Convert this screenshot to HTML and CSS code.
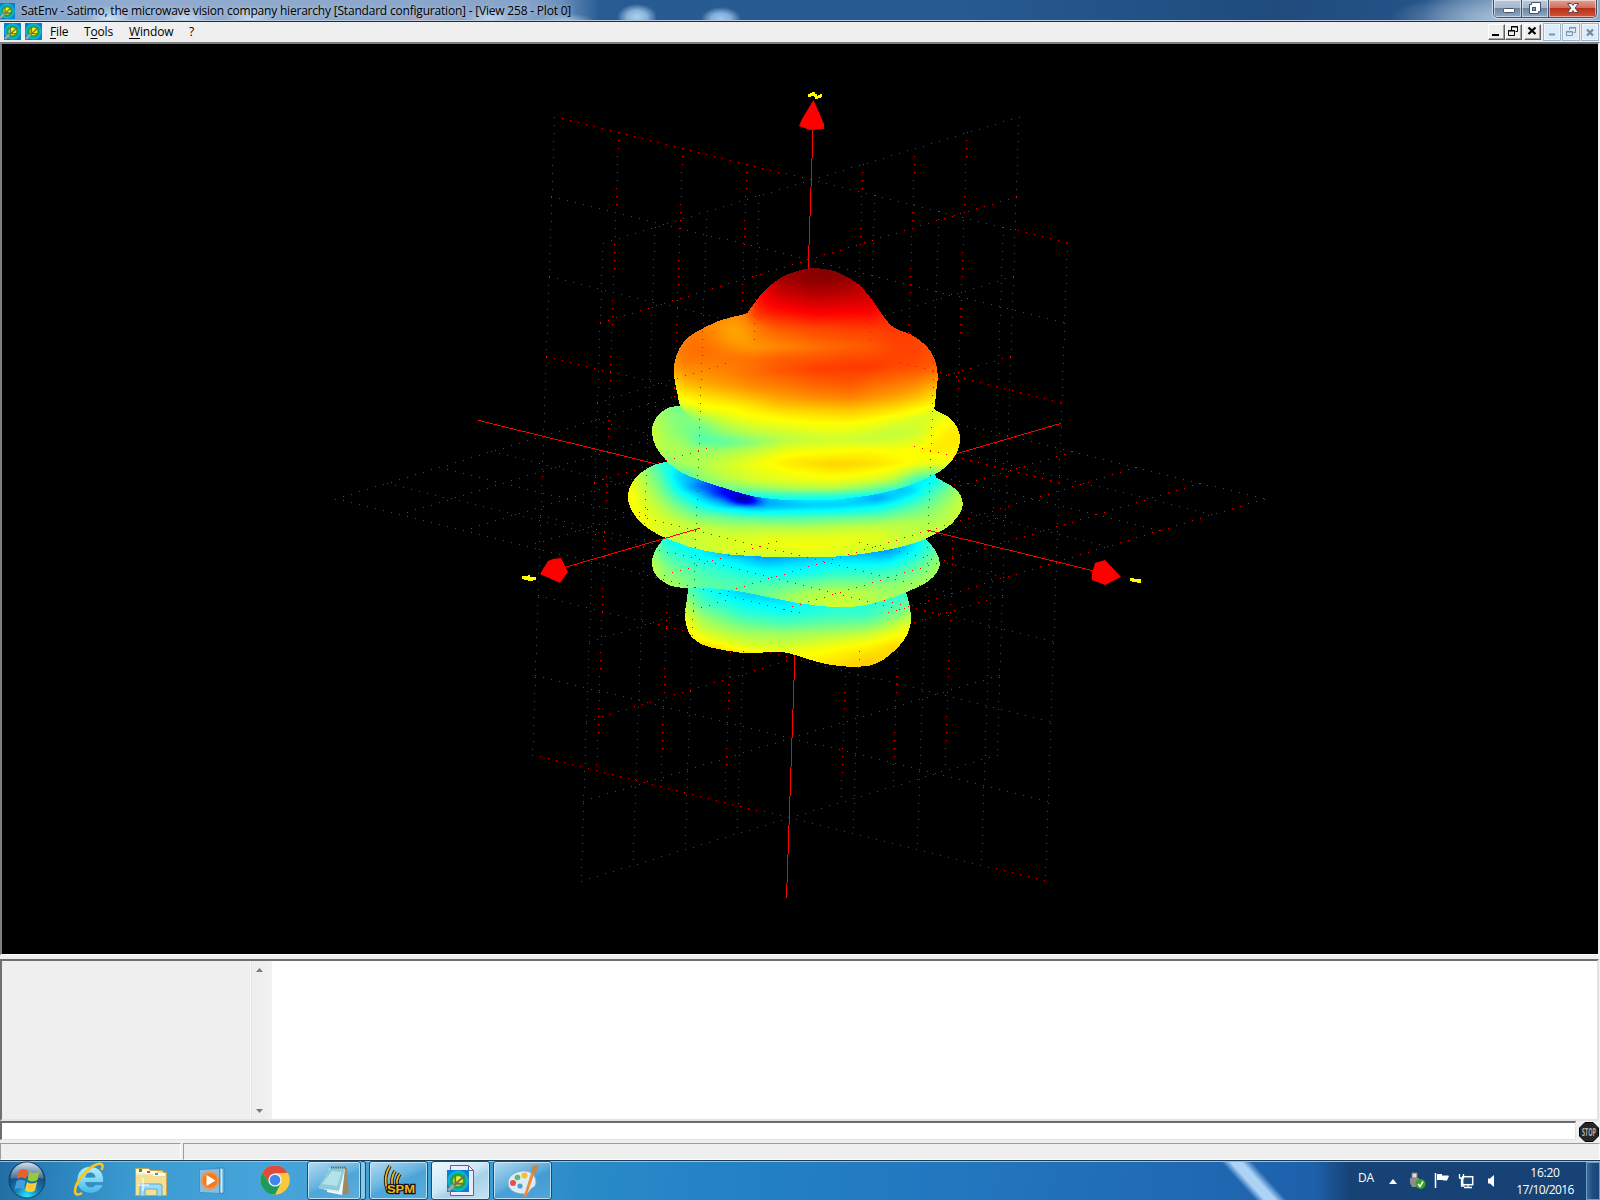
FILE: index.html
```html
<!DOCTYPE html>
<html lang="en">
<head>
<meta charset="utf-8">
<title>SatEnv</title>
<link rel="stylesheet" href="styles.css">
</head>
<body>
<svg class="defs" width="0" height="0">
  <defs>
    <radialGradient id="lobe"><stop offset="0" stop-color="#fff200"/><stop offset=".38" stop-color="#f4ee10"/><stop offset=".52" stop-color="#18a040"/><stop offset=".72" stop-color="#08b088"/><stop offset=".86" stop-color="#10b8e8"/><stop offset="1" stop-color="#0880d0"/></radialGradient>
    <radialGradient id="orb" cx=".5" cy=".95" r=".95"><stop offset="0" stop-color="#28e8ff"/><stop offset=".35" stop-color="#1280b8"/><stop offset=".7" stop-color="#164a78"/><stop offset="1" stop-color="#385f84"/></radialGradient>
    <linearGradient id="gloss" x2="0" y2="1"><stop offset="0" stop-color="#eef6fa" stop-opacity=".85"/><stop offset="1" stop-color="#c0d8e8" stop-opacity=".25"/></linearGradient>
    <linearGradient id="ieblue" x2="0" y2="1"><stop offset="0" stop-color="#b8ecfb"/><stop offset=".5" stop-color="#7fd8f6"/><stop offset="1" stop-color="#45b5e8"/></linearGradient>
    <linearGradient id="manila" x2="1" y2="1"><stop offset="0" stop-color="#fdf3bd"/><stop offset="1" stop-color="#e3c468"/></linearGradient>
    <symbol id="antenna" viewBox="0 0 16 16">
      <rect width="16" height="16" fill="url(#lobe)"/>
      <path d="M6 4v6h7M13 4 4 12" stroke="#6f7256" stroke-width="1.3" fill="none"/>
      <path d="M1 15l4-4" stroke="#a7a78e" stroke-width="2.4"/>
    </symbol>
  </defs>
</svg>

<div class="desktop">
  <header class="titlebar">
    <svg class="app-icon" width="16" height="16"><use href="#antenna"/></svg>
    <span class="title">SatEnv - Satimo, the microwave vision company hierarchy [Standard configuration] - [View 258 - Plot 0]</span>
    <div class="window-buttons">
      <div class="wb wb-min"><svg width="28" height="18"><rect x="9.500" y="8.500" width="11" height="4" rx="1" fill="#fff" stroke="#46536b"/></svg></div>
      <div class="wb wb-max"><svg width="27" height="18"><path d="M9.500 2.500h9v9h-2v2h-9v-9h2z" fill="#fff" stroke="#46536b"/><rect x="10.500" y="7.500" width="3" height="3" fill="#8fa3b8" stroke="#46536b"/></svg></div>
      <div class="wb wb-close"><svg width="47" height="18"><path d="M18.500 3.500h4l1.500 2 1.500-2h4L26 8l3.500 4.500h-4l-1.500-2-1.500 2h-4L22 8z" fill="#fff" stroke="#5a4550"/></svg></div>
    </div>
  </header>

  <nav class="menubar">
    <svg class="m-icon" width="17" height="17"><use href="#antenna"/></svg>
    <svg class="m-icon" width="17" height="17"><use href="#antenna"/></svg>
    <span class="m m-file"><u>F</u>ile</span>
    <span class="m m-tools">T<u>o</u>ols</span>
    <span class="m m-window"><u>W</u>indow</span>
    <span class="m">?</span>
    <div class="mdi">
      <div class="cb"><svg width="14" height="12"><path d="M3 10h7" stroke="#000" stroke-width="2"/></svg></div>
      <div class="cb cb-gap"><svg width="14" height="12"><path d="M5.500 5V1.500h6v5h-2M5 2h7M2.500 5.500h6v5h-6zM2 6h7" stroke="#000" fill="none"/></svg></div>
      <div class="cb"><svg width="14" height="12"><path d="M3.500 2.500l7 6.500M10.500 2.500l-7 6.500" stroke="#000" stroke-width="2.200"/></svg></div>
      <div class="gb"><svg width="14" height="14"><path d="M4 9.500h6" stroke="#7f95a8" stroke-width="2"/></svg></div>
      <div class="gb"><svg width="14" height="14"><path d="M5.500 5V2.500h6v5h-2M5 3h7M2.500 6.500h6v4h-6zM2 7h7" stroke="#7f95a8" fill="none"/></svg></div>
      <div class="gb"><svg width="14" height="14"><path d="M4 4.500l6 6M10 4.500l-6 6" stroke="#76899b" stroke-width="2.200"/></svg></div>
    </div>
  </nav>

  <main class="plot"><canvas id="plot" width="1596" height="910"></canvas></main>

  <section class="output">
    <div class="tree"></div>
    <div class="scroll">
      <svg width="7" height="4"><path d="M3.500 0 7 4H0z" fill="#7b7b7b"/></svg>
      <svg width="7" height="4"><path d="M3.500 4 7 0H0z" fill="#7b7b7b"/></svg>
    </div>
    <div class="log"></div>
  </section>
  <section class="command">
    <div class="input"></div>
    <svg width="20" height="20"><path d="M6 .5h8L19.500 6v8L14 19.500H6L.5 14V6z" fill="#262626" stroke="#000"/><text x="3" y="14" textLength="14" lengthAdjust="spacingAndGlyphs" class="stop">STOP</text></svg>
  </section>
  <footer class="status"><div class="cell-a"></div><div class="cell-b"></div></footer>

  <div class="taskbar">
    <svg class="orb" width="40" height="38" viewBox="7 0 40 38">
      <circle cx="27" cy="19" r="18" fill="url(#orb)" stroke="#173f63"/>
      <path d="M10.500 18a16.500 16.500 0 0 1 33 0q-16-5-33 0z" fill="url(#gloss)"/>
      <path d="M19 9.500q4-3 9 0l-2 8.500q-4-3-9 0z" fill="#e8602c"/>
      <path d="M29.500 10.500q4 3 10 0l-2 8.500q-5 3-10 0z" fill="#97c93d"/>
      <path d="M16.500 20q4-3 9 0l-2 8.500q-4-3-9 0z" fill="#3f9fe0"/>
      <path d="M27 21q4 3 10 0l-2 8.500q-5 3-10 0z" fill="#ffcb3a"/>
    </svg>
    <svg class="ie" width="32" height="36" viewBox="73 0 32 36">
      <path d="M90 5.500c8 0 13.500 5.500 13.500 13.500v2.500H85.500c.5 3 2.500 4.500 5.500 4.500 2.200 0 3.600-.8 4.400-2.200h7.600c-2 5.500-6.500 8.500-12.500 8.500-8 0-13.500-5.500-13.500-13.300C77 11.300 82.500 5.500 90 5.500zm-4.300 10.700h9.400c-.5-3-2-4.400-4.700-4.400-2.600 0-4.200 1.500-4.700 4.400z" fill="url(#ieblue)" stroke="#2a86bd" stroke-width=".6"/>
      <path d="M82 32c-4 2.500-7 2-7-2 0-8 12-24 23-27 5-1 5.500 2 3.500 6" fill="none" stroke="#f8c61c" stroke-width="2.600"/>
    </svg>
    <svg class="folder" width="34" height="32" viewBox="134 5 34 32">
      <path d="M135.500 7.500h13l2 2h12l1 2h3v23h-31z" fill="url(#manila)" stroke="#c7a650"/>
      <path d="M137 8h12v4h-12zM145 10h12v3h-12zM153 12h12v3h-12z" fill="#fffdf0"/>
      <path d="M139 8h3v3h-3z" fill="#12a54a"/><path d="M147 10h3v2h-3z" fill="#d8402c"/><path d="M155 12h3v2h-3z" fill="#3b8fe0"/>
      <path d="M136 14h12l2 2h16v18h-30z" fill="#f3e092"/>
      <path d="M140 35V25q0-2 2-2h18q2 0 2 2v10h-5v-7h-12v7z" fill="#9fdcf4" stroke="#5aa9cf"/>
      <path d="M143 17v13M138 24h11" stroke="#fff" stroke-width="1"/>
    </svg>
    <svg class="wmp" width="30" height="28" viewBox="198 6 30 28">
      <path d="M215 7h9v25h-9z" fill="#8cc3e2" stroke="#3784b5"/><path d="M221.500 8v24" stroke="#d7eef9"/>
      <path d="M199.500 8.500l20-1v25l-20-1z" fill="#86bedf" stroke="#4a90bd"/>
      <circle cx="210" cy="19.500" r="9" fill="#f47a20"/><circle cx="210" cy="19.500" r="8" fill="none" stroke="#fba35e"/>
      <path d="M206.500 14v11l9-5.500z" fill="#fff"/>
    </svg>
    <svg class="chrome" width="30" height="30" viewBox="-15 -15 30 30">
      <circle r="14.500" fill="#fbc93d"/>
      <path d="M-12.600-7.200A14.500 14.500 0 0 1 12.600-7.200L0-6.500-5.600 3.200z" fill="#dd4b3e"/>
      <path d="M-12.600-7.200A14.500 14.500 0 0 0 .3 14.500L6 3.200-5.600 3.200z" fill="#1c9c5a"/>
      <path d="M0-6.600h13.100A14.500 14.500 0 0 1 .3 14.500L6 3.200z" fill="#fbc93d"/>
      <circle r="6.600" fill="#f4f7f8"/><circle r="5.300" fill="#3f86ee"/>
    </svg>

    <div class="task task-stack">
      <svg width="34" height="32" viewBox="317 4 34 32">
        <path d="M330 7h17l2 25-5 2z" fill="#9b8a66"/><path d="M329 7h16l-3 27-15-3z" fill="#f5f9fa"/>
        <path d="M330 7h15l-6 23-21-3z" fill="#8ccbd9"/><path d="M332 10l10 1-5 14-15-2z" fill="#b4e2e9"/>
        <path d="M331 6.500h15" stroke="#51606a" stroke-width="2" stroke-dasharray="1.200 1"/>
        <path d="M318 27l21 3-1 2z" fill="#d9f0f2"/>
      </svg>
    </div>
    <div class="stack-edge"></div>
    <div class="task">
      <svg width="36" height="32" viewBox="381 4 36 32">
        <g fill="none" stroke="#141414" stroke-width="3.600"><path d="M390 5q-7 11-3 23M395 10q-5 8-2 18M400 13q-5 6-2 14"/></g>
        <g fill="none" stroke="#f2b518" stroke-width="1.800"><path d="M390 5q-7 11-3 23M395 10q-5 8-2 18M400 13q-5 6-2 14"/></g>
        <text x="387" y="31.500" textLength="28" lengthAdjust="spacingAndGlyphs" class="spm">SPM</text>
      </svg>
    </div>
    <div class="task task-active">
      <svg width="30" height="34" viewBox="445 3 30 34">
        <path d="M449.500 4.500h18l5 5v25h-23z" fill="#eeeaff" stroke="#635d9a"/><path d="M467.500 4.500v5h5z" fill="#fff" stroke="#635d9a"/>
        <svg x="446" y="9" width="22" height="22"><use href="#antenna"/></svg>
      </svg>
    </div>
    <div class="task">
      <svg width="34" height="34" viewBox="506 3 34 34">
        <path d="M522 10c8-1 14 4 14 11 0 5-3 5-5 7s-2 5-7 5c-9 0-16-4-16-11 0-7 6-11 14-12z" fill="#d9ecf8" stroke="#7fa9c6"/>
        <circle cx="520" cy="25" r="2.600" fill="#4f9fcf"/><circle cx="513" cy="22" r="3" fill="#e2524b"/><circle cx="517.500" cy="16.500" r="2.800" fill="#5fbf57"/><circle cx="524.500" cy="14.500" r="3" fill="#f6bf2f"/>
        <path d="M523.500 36l8-25 3 1-8 23z" fill="#ee8a38"/><path d="M531 11l1-6 7-1-2 6-2 3z" fill="#b98a5c"/>
      </svg>
    </div>

    <div class="tray">
      <span class="lang">DA</span>
      <svg class="t-up" width="8" height="5"><path d="M4 0l4 5H0z" fill="#fff"/></svg>
      <svg class="t-usb" width="17" height="18"><path d="M3 1h5v5H3z" fill="#ddd" stroke="#777"/><path d="M1 6h9v5l-2 4H3l-2-4z" fill="#8c8c8c"/><circle cx="11.500" cy="12" r="5" fill="#35a424"/><path d="M9 12l2 2.500 3-5" stroke="#fff" stroke-width="1.500" fill="none"/></svg>
      <svg class="t-flag" width="16" height="16"><path d="M1.500 1v15" stroke="#fff" stroke-width="1.500"/><path d="M3 2h5v1.500h6l1 .5-2 4.500H9V8H3z" fill="#fff"/></svg>
      <svg class="t-net" width="16" height="16"><rect x="4.700" y="3.700" width="10" height="8" fill="#1b4a7c" stroke="#fff" stroke-width="1.500"/><path d="M6 14.500h8M10 12v2M1.500 1v4h4V1M3.500 5v8h3" stroke="#fff" stroke-width="1.300" fill="none"/></svg>
      <svg class="t-vol" width="8" height="14"><path d="M1 4.500h2L7 1v12L3 9.500H1z" fill="#fff"/></svg>
      <div class="clock"><span class="time">16:20</span><span class="date">17/10/2016</span></div>
      <div class="show-desktop"></div>
    </div>
  </div>
</div>
<script src="plot.js"></script>
</body>
</html>
```
FILE: styles.css
```css
* { box-sizing: border-box; }
body { margin: 0; background: #efefef; font-family: "Open Sans", "Noto Sans", sans-serif; font-size: 12px; color: #000; }
.defs { position: absolute; }
svg { display: block; flex: none; }
.desktop { width: 1600px; height: 1200px; overflow: hidden; display: flex; flex-direction: column; background: #efefef; }

.titlebar {
  height: 22px; flex: none; display: flex; align-items: flex-start;
  border-bottom: 1px solid #1b2c4a; box-shadow: inset 0 -1px 0 #b9cbdf;
  background:
    radial-gradient(ellipse 22px 14px at 109px 20px, rgba(215,235,250,.9), transparent),
    radial-gradient(ellipse 22px 12px at 185px 20px, rgba(205,228,248,.9), transparent),
    radial-gradient(ellipse 24px 14px at 250px 20px, rgba(205,228,248,.8), transparent),
    radial-gradient(ellipse 30px 8px at 420px 20px, rgba(196,160,175,.8), transparent),
    radial-gradient(ellipse 26px 14px at 490px 20px, rgba(205,228,248,.8), transparent),
    radial-gradient(ellipse 30px 9px at 565px 22px, rgba(185,212,242,.8), transparent),
    radial-gradient(ellipse 20px 13px at 637px 17px, #aad2f0, rgba(170,210,240,.75) 50%, transparent),
    radial-gradient(ellipse 20px 12px at 721px 19px, #9ecaf2, rgba(158,202,242,.75) 50%, transparent),
    radial-gradient(ellipse 110px 26px at 1500px 18px, rgba(170,195,220,.9), transparent),
    linear-gradient(90deg, #7c9fc9 0, #92acd0 8%, #8ca8cc 22%, #86a3c9 33%, #6d90bc 35%, #285b92 37.5%, #265a91 60%, #1f4b7d 80%, #265388 89%, #7796b8 94%, #8fa8c4 100%);
}
.app-icon { margin: 3px 6px 0 -1px; }
.title { line-height: 21px; white-space: nowrap; text-shadow: 0 0 5px rgba(255,255,255,.5); letter-spacing: -.2px; }
.window-buttons { margin-left: auto; margin-right: 3px; height: 18px; display: flex; border: 1px solid #43526a; border-top: 0; border-radius: 0 0 5px 5px; overflow: hidden; box-shadow: 0 0 1px 1px rgba(230,240,250,.7); }
.wb { height: 17px; border-right: 1px solid #43526a; background: linear-gradient(#b9c9d9 0, #a5b9cc 45%, #6b87a6 50%, #90aac2 100%); box-shadow: inset 0 0 0 1px rgba(255,255,255,.5); }
.wb-min { width: 28px; } .wb-max { width: 27px; }
.wb-close { width: 47px; border-right: 0; background: linear-gradient(#e2a196 0, #d0705f 45%, #b92f19 50%, #d2563a 100%); }

.menubar { height: 20px; flex: none; display: flex; padding-left: 4px; background: #efefef; }
.m-icon { margin: 1px 4px 0 0; }
.m { line-height: 19px; letter-spacing: -.15px; }
.m u { text-underline-offset: 2px; }
.m-icon + .m { margin-left: 4px; }
.m-file { width: 34px; } .m-tools { width: 45px; } .m-window { width: 60px; }
.mdi { margin-left: auto; margin-right: 1px; display: flex; padding-top: 1px; }
.cb { width: 17px; height: 16px; margin-top: 1px; background: #efefef; border: 1px solid; border-color: #fff #606060 #606060 #fff; box-shadow: inset -1px -1px 0 #a5a5a5; }
.cb-gap { margin-right: 2px; }
.gb { width: 18px; height: 18px; margin-left: 1px; padding: 1px; border: 1px solid #9db4ca; background: #dcebf9; box-shadow: inset 0 0 0 1px #eef6fd; }
.cb + .gb { margin-left: 2px; }

.plot { height: 913px; flex: none; border: solid; border-width: 2px 2px 1px 2px; border-color: #7f7f7f #efefef #fff #7f7f7f; background: #000; }
.plot canvas { display: block; }

.output { width: 1599px; height: 162px; flex: none; margin-top: 4px; display: flex; border: 2px solid; border-color: #707070 #e3e3e3 #e3e3e3 #707070; background: #fff; }
.tree { width: 249px; background: #efefef; border-right: 1px solid #f8f8f8; }
.scroll { width: 21px; background: #efefef; display: flex; flex-direction: column; justify-content: space-between; padding: 7px 0 6px 4px; border-left: 1px solid #e4e4e4; box-shadow: inset -5px 0 0 #f1f1f1; }
.log { flex: 1; background: #fff; }
.command { height: 20px; flex: none; display: flex; justify-content: space-between; padding-right: 1px; margin-bottom: 2px; }
.command svg { margin-top: 1px; }
.input { width: 1576px; height: 19px; border: solid; border-width: 2px 1px 1px 2px; border-color: #6d6d6d #e3e3e3 #e3e3e3 #6d6d6d; background: #fff; }
.stop { font: 700 10px "Open Sans", sans-serif; fill: #b5b5b5; }
.spm { font: 700 11px "Liberation Sans", sans-serif; fill: #f2b518; stroke: #141414; stroke-width: 2.5px; paint-order: stroke; }
.status { flex: 1; display: flex; gap: 2px; }
.status div { border: 1px solid; border-color: #9c9c9c #fff #fff #9c9c9c; }
.cell-a { width: 181px; } .cell-b { flex: 1; }

.taskbar {
  height: 40px; flex: none; display: flex; align-items: flex-start;
  border-top: 1px solid #1c3d58; box-shadow: inset 0 1px 0 #8dc4e4;
  background:
    linear-gradient(90deg, transparent 1315px, rgba(20,58,102,.75) 1350px),
    linear-gradient(48deg, transparent 933px, rgba(180,216,250,.95) 940px, rgba(180,216,250,.95) 948px, transparent 956px),
    linear-gradient(95deg, #226ea4 0, #2b84bc 60px, #3a9ad0 130px, #46a4da 260px, #3f9ed6 480px, #2a8bc8 580px, #2483c6 700px, #2277bf 950px, #1f65b0 1250px, #1c59a3 1400px);
}
.orb { margin: 0 0 0 7px; }
.ie { margin-left: 26px; }
.folder { margin: 5px 0 0 29px; }
.wmp { margin: 6px 0 0 30px; }
.chrome { margin: 4px 17px 0 32px; }
.task { width: 59px; height: 39px; margin-right: 3px; display: flex; justify-content: center; align-items: center; border: 1px solid #14506f; border-radius: 3px; background: linear-gradient(155deg, rgba(215,238,250,.75), rgba(140,198,232,.5) 45%, rgba(90,170,218,.4) 55%, rgba(120,190,228,.45)); box-shadow: inset 0 0 0 1px rgba(225,243,252,.7); }
.task-stack { width: 54px; margin-right: 0; }
.stack-edge { width: 5px; height: 39px; margin-right: 3px; border: 1px solid #14506f; border-left: 0; border-radius: 0 3px 3px 0; background: #8fc6e6; }
.task-active { background: linear-gradient(150deg, #eef8fd, #cde7f5 45%, #a5d1ea 60%, #c5e3f3); }
.tray { margin-left: auto; display: flex; color: #fff; }
.lang { width: 31px; margin-top: 9px; line-height: 16px; letter-spacing: -.3px; }
.t-up { margin-top: 18px; width: 8px; }
.t-usb { margin: 11px 0 0 12px; }
.t-flag { margin: 11px 0 0 8px; }
.t-net { margin: 12px 0 0 8px; }
.t-vol { margin: 13px 0 0 13px; }
.clock { width: 58px; margin: 3px 0 0 21px; display: flex; flex-direction: column; align-items: center; line-height: 17px; letter-spacing: -.25px; white-space: nowrap; }
.date { letter-spacing: -.6px; }
.show-desktop { width: 14px; height: 38px; margin: 1px 0 0 12px; border: 1px solid #6f9cc4; background: linear-gradient(90deg, #3e6c99, #1e4b80 50%, #17457c); }
```
FILE: plot.js
```js
// Far-field directivity plot: three dotted reference planes, the axes and the lobes.
const canvas = document.getElementById('plot');
const ctx = canvas.getContext('2d');
const OX = 2, OY = 44;          // canvas origin in window coordinates
const SX = 600, SY = 250;       // origin of the surface raster
const SW = 400, SH = 430;       // surface raster size; lobe data uses 1/3 px units

// Each lobe: closed outline, then columns of x followed by (y, level) pairs.
const lobes = [
  {
    outline: [268,1000,262,1040,255,1090,260,1130,275,1160,310,1185,370,1200,445,1210,500,1207,550,1207,585,1215,640,1232,700,1246,750,1250,800,1248,840,1235,880,1205,912,1170,930,1130,932,1090,925,1050,915,1020,900,990,600,985,300,990],
    cols: [
      [260,1010,.46,1060,.55,1110,.62,1160,.66],
      [300,1010,.40,1060,.45,1100,.53,1140,.58,1170,.63,1190,.68],
      [430,1030,.33,1060,.38,1090,.42,1120,.48,1150,.54,1190,.60,1210,.66],
      [550,1045,.34,1080,.38,1120,.45,1150,.53,1180,.57,1207,.61],
      [700,1070,.41,1100,.44,1130,.5,1160,.57,1190,.62,1245,.66],
      [800,1060,.41,1095,.43,1125,.5,1150,.57,1180,.625,1215,.66,1250,.68],
      [900,1030,.42,1060,.44,1090,.5,1120,.57,1145,.62,1190,.67],
      [930,1040,.46,1090,.55,1130,.62]]
  },
  {
    outline: [200,860,180,880,160,915,156,945,168,975,195,998,225,1010,270,1014,330,1015,390,1020,450,1030,520,1045,600,1060,660,1068,720,1071,780,1068,830,1057,880,1042,925,1024,965,1006,1000,980,1018,950,1018,930,1005,900,980,870,950,850,600,840,250,850],
    cols: [
      [156,900,.52,950,.57,980,.56],
      [200,870,.38,900,.42,940,.48,980,.52,1000,.55],
      [300,890,.36,920,.38,950,.43,980,.46,1015,.47],
      [400,910,.30,930,.36,960,.40,990,.44,1020,.46],
      [500,918,.27,930,.30,950,.35,975,.39,1000,.45,1045,.5],
      [600,920,.31,940,.35,970,.39,1000,.47,1030,.54,1060,.55],
      [700,918,.33,940,.37,970,.42,1000,.5,1030,.57,1070,.58],
      [800,910,.30,930,.35,960,.41,990,.47,1020,.55,1065,.56],
      [860,900,.27,920,.32,950,.40,980,.46,1010,.52,1045,.54],
      [950,870,.36,900,.38,930,.43,960,.48,1000,.54],
      [1018,900,.48,940,.54,980,.55]]
  },
  {
    outline: [200,635,150,650,110,680,90,710,84,745,95,780,120,815,160,845,200,865,260,888,330,905,420,916,520,921,620,922,720,919,800,910,870,898,940,880,1000,855,1050,825,1080,790,1088,760,1078,730,1050,705,1010,683,995,665,900,620,600,610,300,620],
    cols: [
      [84,700,.62,745,.64,790,.63],
      [130,650,.52,700,.56,750,.59,800,.61,850,.62],
      [180,640,.42,680,.46,720,.5,760,.55,810,.59,860,.59],
      [230,650,.36,680,.33,700,.36,730,.41,770,.5,820,.58,875,.56],
      [300,685,.28,710,.22,730,.31,760,.38,790,.47,830,.57,870,.58,900,.57],
      [370,710,.14,730,.10,750,.26,775,.37,800,.48,840,.57,880,.59,912,.58],
      [430,725,.12,745,-.06,757,.08,772,.34,795,.42,815,.51,850,.58,880,.60,918,.58],
      [463,735,.20,748,.13,758,.12,768,.27,785,.38,810,.50,840,.57,880,.6,920,.58],
      [490,738,.33,752,.28,768,.30,785,.38,815,.5,840,.57,875,.61,920,.58],
      [620,735,.39,765,.32,785,.39,815,.5,840,.57,880,.62,920,.59],
      [720,735,.39,760,.32,780,.38,810,.5,835,.57,870,.61,915,.59],
      [830,720,.36,742,.27,765,.36,795,.46,825,.56,860,.6,905,.57],
      [920,700,.35,722,.31,745,.38,780,.47,820,.56,885,.57],
      [1000,670,.37,695,.38,730,.45,780,.52,850,.57],
      [1088,700,.54,760,.58]]
  },
  {
    outline: [245,465,210,472,180,490,160,520,156,550,168,590,200,632,240,665,300,690,370,713,430,731,480,742,560,750,680,750,780,740,860,725,930,705,1000,675,1040,648,1070,610,1080,565,1070,530,1045,500,1005,480,990,460,900,430,600,420,300,430],
    cols: [
      [156,500,.55,560,.58,600,.56],
      [200,470,.5,500,.52,550,.53,600,.55,632,.5],
      [245,465,.48,500,.49,540,.5,590,.54,640,.55,665,.45],
      [300,500,.54,530,.48,570,.45,600,.53,650,.55,690,.5],
      [370,510,.58,545,.52,575,.46,600,.53,640,.58,680,.56,713,.48],
      [450,510,.61,550,.55,575,.5,600,.56,640,.61,690,.58,715,.5,738,.38],
      [560,510,.63,545,.58,570,.56,600,.61,635,.645,680,.61,710,.56,730,.45,750,.37],
      [700,515,.65,545,.6,570,.58,600,.62,640,.67,680,.625,710,.57,735,.42,750,.37],
      [800,510,.64,540,.59,570,.57,600,.63,640,.66,680,.61,700,.56,720,.47,742,.35],
      [880,490,.62,550,.56,600,.62,640,.64,670,.6,690,.55,722,.4],
      [960,480,.6,520,.58,550,.58,600,.63,640,.61,665,.52,690,.4],
      [1010,480,.58,530,.62,590,.65,640,.6,670,.48],
      [1075,520,.64,565,.65,610,.63]]
  },
  {
    outline: [645,55,675,57,705,64,735,77,765,95,792,119,815,148,835,178,855,205,873,226,892,238,915,247,940,258,965,275,985,295,1000,320,1010,350,1013,385,1008,430,1003,475,990,487,940,500,820,525,700,531,560,528,420,520,320,508,265,492,240,465,232,430,223,385,222,350,230,315,248,280,270,258,300,240,330,224,365,210,400,200,438,191,450,177,463,160,480,137,500,116,524,96,552,78,582,66,612,58],
    cols: [
      [222,300,.74,350,.72,385,.67,430,.63,465,.58],
      [250,275,.76,330,.76,380,.72,420,.66,460,.61,485,.52],
      [310,235,.75,300,.77,360,.74,400,.71,450,.64,480,.61,508,.53],
      [400,205,.73,235,.71,270,.72,320,.76,370,.75,410,.72,470,.63,500,.61,520,.57],
      [430,190,.75,215,.73,250,.715,280,.72,320,.76,370,.76,410,.73,470,.64,500,.62,520,.58],
      [470,150,.86,190,.83,230,.76,290,.73,330,.77,370,.77,420,.73,470,.65,520,.6],
      [530,90,.96,130,.92,175,.87,210,.82,250,.77,290,.74,320,.78,360,.79,420,.74,460,.69,500,.63,528,.6],
      [645,55,1,90,.99,130,.95,195,.87,230,.81,290,.765,320,.79,355,.815,400,.78,440,.74,480,.67,530,.61],
      [750,85,.98,120,.95,190,.87,230,.82,285,.78,350,.82,400,.79,440,.75,480,.68,528,.61],
      [820,150,.91,200,.86,240,.81,290,.79,350,.82,400,.77,440,.73,490,.65,520,.61],
      [880,230,.82,290,.81,340,.81,390,.77,430,.73,480,.65,510,.6],
      [950,265,.81,310,.81,360,.79,400,.74,440,.69,480,.62,500,.6],
      [1010,340,.79,385,.73,430,.66,480,.6]]
  }
];

function columnLevel(col, y) {
  const n = (col.length - 1) / 2;
  if (y <= col[1]) return col[2];
  for (let i = 1; i < n; i++) {
    const y0 = col[i * 2 - 1], y1 = col[i * 2 + 1];
    if (y <= y1) return col[i * 2] + (col[i * 2 + 2] - col[i * 2]) * (y - y0) / (y1 - y0);
  }
  return col[col.length - 1];
}

function level(cols, x, y) {
  if (x <= cols[0][0]) return columnLevel(cols[0], y);
  for (let i = 1; i < cols.length; i++) {
    if (x <= cols[i][0]) {
      const t = (x - cols[i - 1][0]) / (cols[i][0] - cols[i - 1][0]);
      return columnLevel(cols[i - 1], y) * (1 - t) + columnLevel(cols[i], y) * t;
    }
  }
  return columnLevel(cols[cols.length - 1], y);
}

function blur(src, dx, dy, r) {
  const out = new Float32Array(src.length);
  for (let y = 0; y < SH; y++) for (let x = 0; x < SW; x++) {
    let s = 0;
    for (let k = -r; k <= r; k++) {
      const xx = Math.min(SW - 1, Math.max(0, x + k * dx)), yy = Math.min(SH - 1, Math.max(0, y + k * dy));
      s += src[yy * SW + xx];
    }
    out[y * SW + x] = s / (2 * r + 1);
  }
  return out;
}

function jet(v) {
  const c = k => 255 * Math.min(1, Math.max(0, 1.5 - Math.abs(4 * v - k)));
  return [c(3), c(2), c(1)];
}

function outlineMask(p) {
  const c = document.createElement('canvas');
  c.width = SW; c.height = SH;
  const g = c.getContext('2d'), n = p.length / 2;
  const at = i => { i = (i + n) % n; return [p[i * 2] / 3, p[i * 2 + 1] / 3]; };
  g.beginPath();
  g.moveTo(...at(0));
  for (let i = 0; i < n; i++) {
    const a = at(i - 1), b = at(i), d = at(i + 1), e = at(i + 2);
    g.bezierCurveTo(b[0] + (d[0] - a[0]) / 6, b[1] + (d[1] - a[1]) / 6, d[0] - (e[0] - b[0]) / 6, d[1] - (e[1] - b[1]) / 6, d[0], d[1]);
  }
  g.fill();
  return g.getImageData(0, 0, SW, SH).data;
}

ctx.fillStyle = '#000';
ctx.fillRect(0, 0, 1596, 910);

const solid = new Uint8Array(SW * SH);
const image = ctx.getImageData(SX - OX, SY - OY, SW, SH);
for (const lobe of lobes) {
  const mask = outlineMask(lobe.outline);
  let f = new Float32Array(SW * SH);
  for (let y = 0; y < SH; y++) for (let x = 0; x < SW; x++) f[y * SW + x] = level(lobe.cols, x * 3, y * 3);
  f = blur(blur(f, 1, 0, 6), 1, 0, 5);
  f = blur(blur(f, 0, 1, 2), 0, 1, 1);
  for (let i = 0; i < f.length; i++) {
    if (mask[i * 4 + 3] < 128) continue;
    solid[i] = 1;
    const [r, g, b] = jet(f[i]);
    image.data[i * 4] = r; image.data[i * 4 + 1] = g; image.data[i * 4 + 2] = b;
  }
}
ctx.putImageData(image, SX - OX, SY - OY);

function inSurface(x, y) {
  const px = Math.round(x) - SX, py = Math.round(y) - SY;
  return px >= 0 && py >= 0 && px < SW && py < SH && solid[py * SW + px] === 1;
}

// Line with one lit pixel every `step` along its major axis.
function line(x0, y0, x1, y1, step, visible) {
  const n = Math.round(Math.max(Math.abs(x1 - x0), Math.abs(y1 - y0)));
  for (let i = 0; i <= n; i += step) {
    const t = i / n, x = x0 + (x1 - x0) * t, y = y0 + (y1 - y0) * t;
    if (visible(x, y, t)) ctx.fillRect(Math.floor(x) - OX, Math.floor(y) - OY, 1, 1);
  }
}

const C = [800, 499], A = [64.1, 15.75], B = [-52, 15.75], Z = [2.75, -79.75];
const radiusAt = z => z > 2.15 ? .95 : z > 1.5 ? 1.4 : z > .5 ? 1.7 : z > -.5 ? 1.95 : z > -1.7 ? 1.35 : .9;
const upright = (u, z) => u > radiusAt(z);
const flat = (u, v) => u + v > 0 && u + v < 7.25 && Math.hypot(u, v) >= 1.95;

function plane(E, F, front) {
  const seg = (u0, v0, u1, v1) => line(
    C[0] + E[0] * u0 + F[0] * v0, C[1] + E[1] * u0 + F[1] * v0,
    C[0] + E[0] * u1 + F[0] * v1, C[1] + E[1] * u1 + F[1] * v1, 8,
    (x, y, t) => !inSurface(x, y) || front(u0 + (u1 - u0) * t, v0 + (v1 - v0) * t));
  for (let k = -4; k <= 4; k++) {
    if (k === 0) continue;
    seg(-4, k, 4, k);
    seg(k, 4, k, -4);
  }
}
ctx.fillStyle = '#f00';
plane(A, Z, upright);
plane(B, Z, upright);
plane(A, B, flat);

// Axes
line(813, 129, 786.5, 897, 1, (x, y) => !inSurface(x, y));
line(478.5, 420.5, 1096, 571.5, 1, (x, y) => !inSurface(x, y) || x > 927);
line(1060, 423.5, 564, 567.5, 1, (x, y) => !inSurface(x, y) || x < 700);

function head(points) {
  ctx.beginPath();
  points.forEach(([x, y]) => ctx.lineTo(x - OX, y - OY));
  ctx.fill();
}
head([[813.5, 100], [824, 124], [824, 129], [810, 130], [799, 126], [802, 119]]);
head([[540, 574], [548, 561], [553, 559], [561, 558], [568, 572], [560, 583]]);
head([[1095, 563], [1105, 560], [1121, 577], [1105, 585], [1092, 580], [1092, 573]]);

// Axis letters, seen nearly edge-on
ctx.fillStyle = '#ff0';
const marks = [
  [808, 94, 3, 3], [810, 93, 4, 3], [812, 92, 3, 2], [814, 94, 3, 3], [815, 96, 3, 3], [818, 95, 3, 3], [820, 94, 2, 3],
  [522, 576, 8, 3], [524, 577, 12, 3], [528, 575, 2, 6], [530, 579, 3, 2], [533, 577, 3, 3],
  [1130, 578, 4, 3], [1132, 579, 9, 3], [1137, 580, 4, 3]
];
for (const [x, y, w, h] of marks) ctx.fillRect(x - OX, y - OY, w, h);
```
